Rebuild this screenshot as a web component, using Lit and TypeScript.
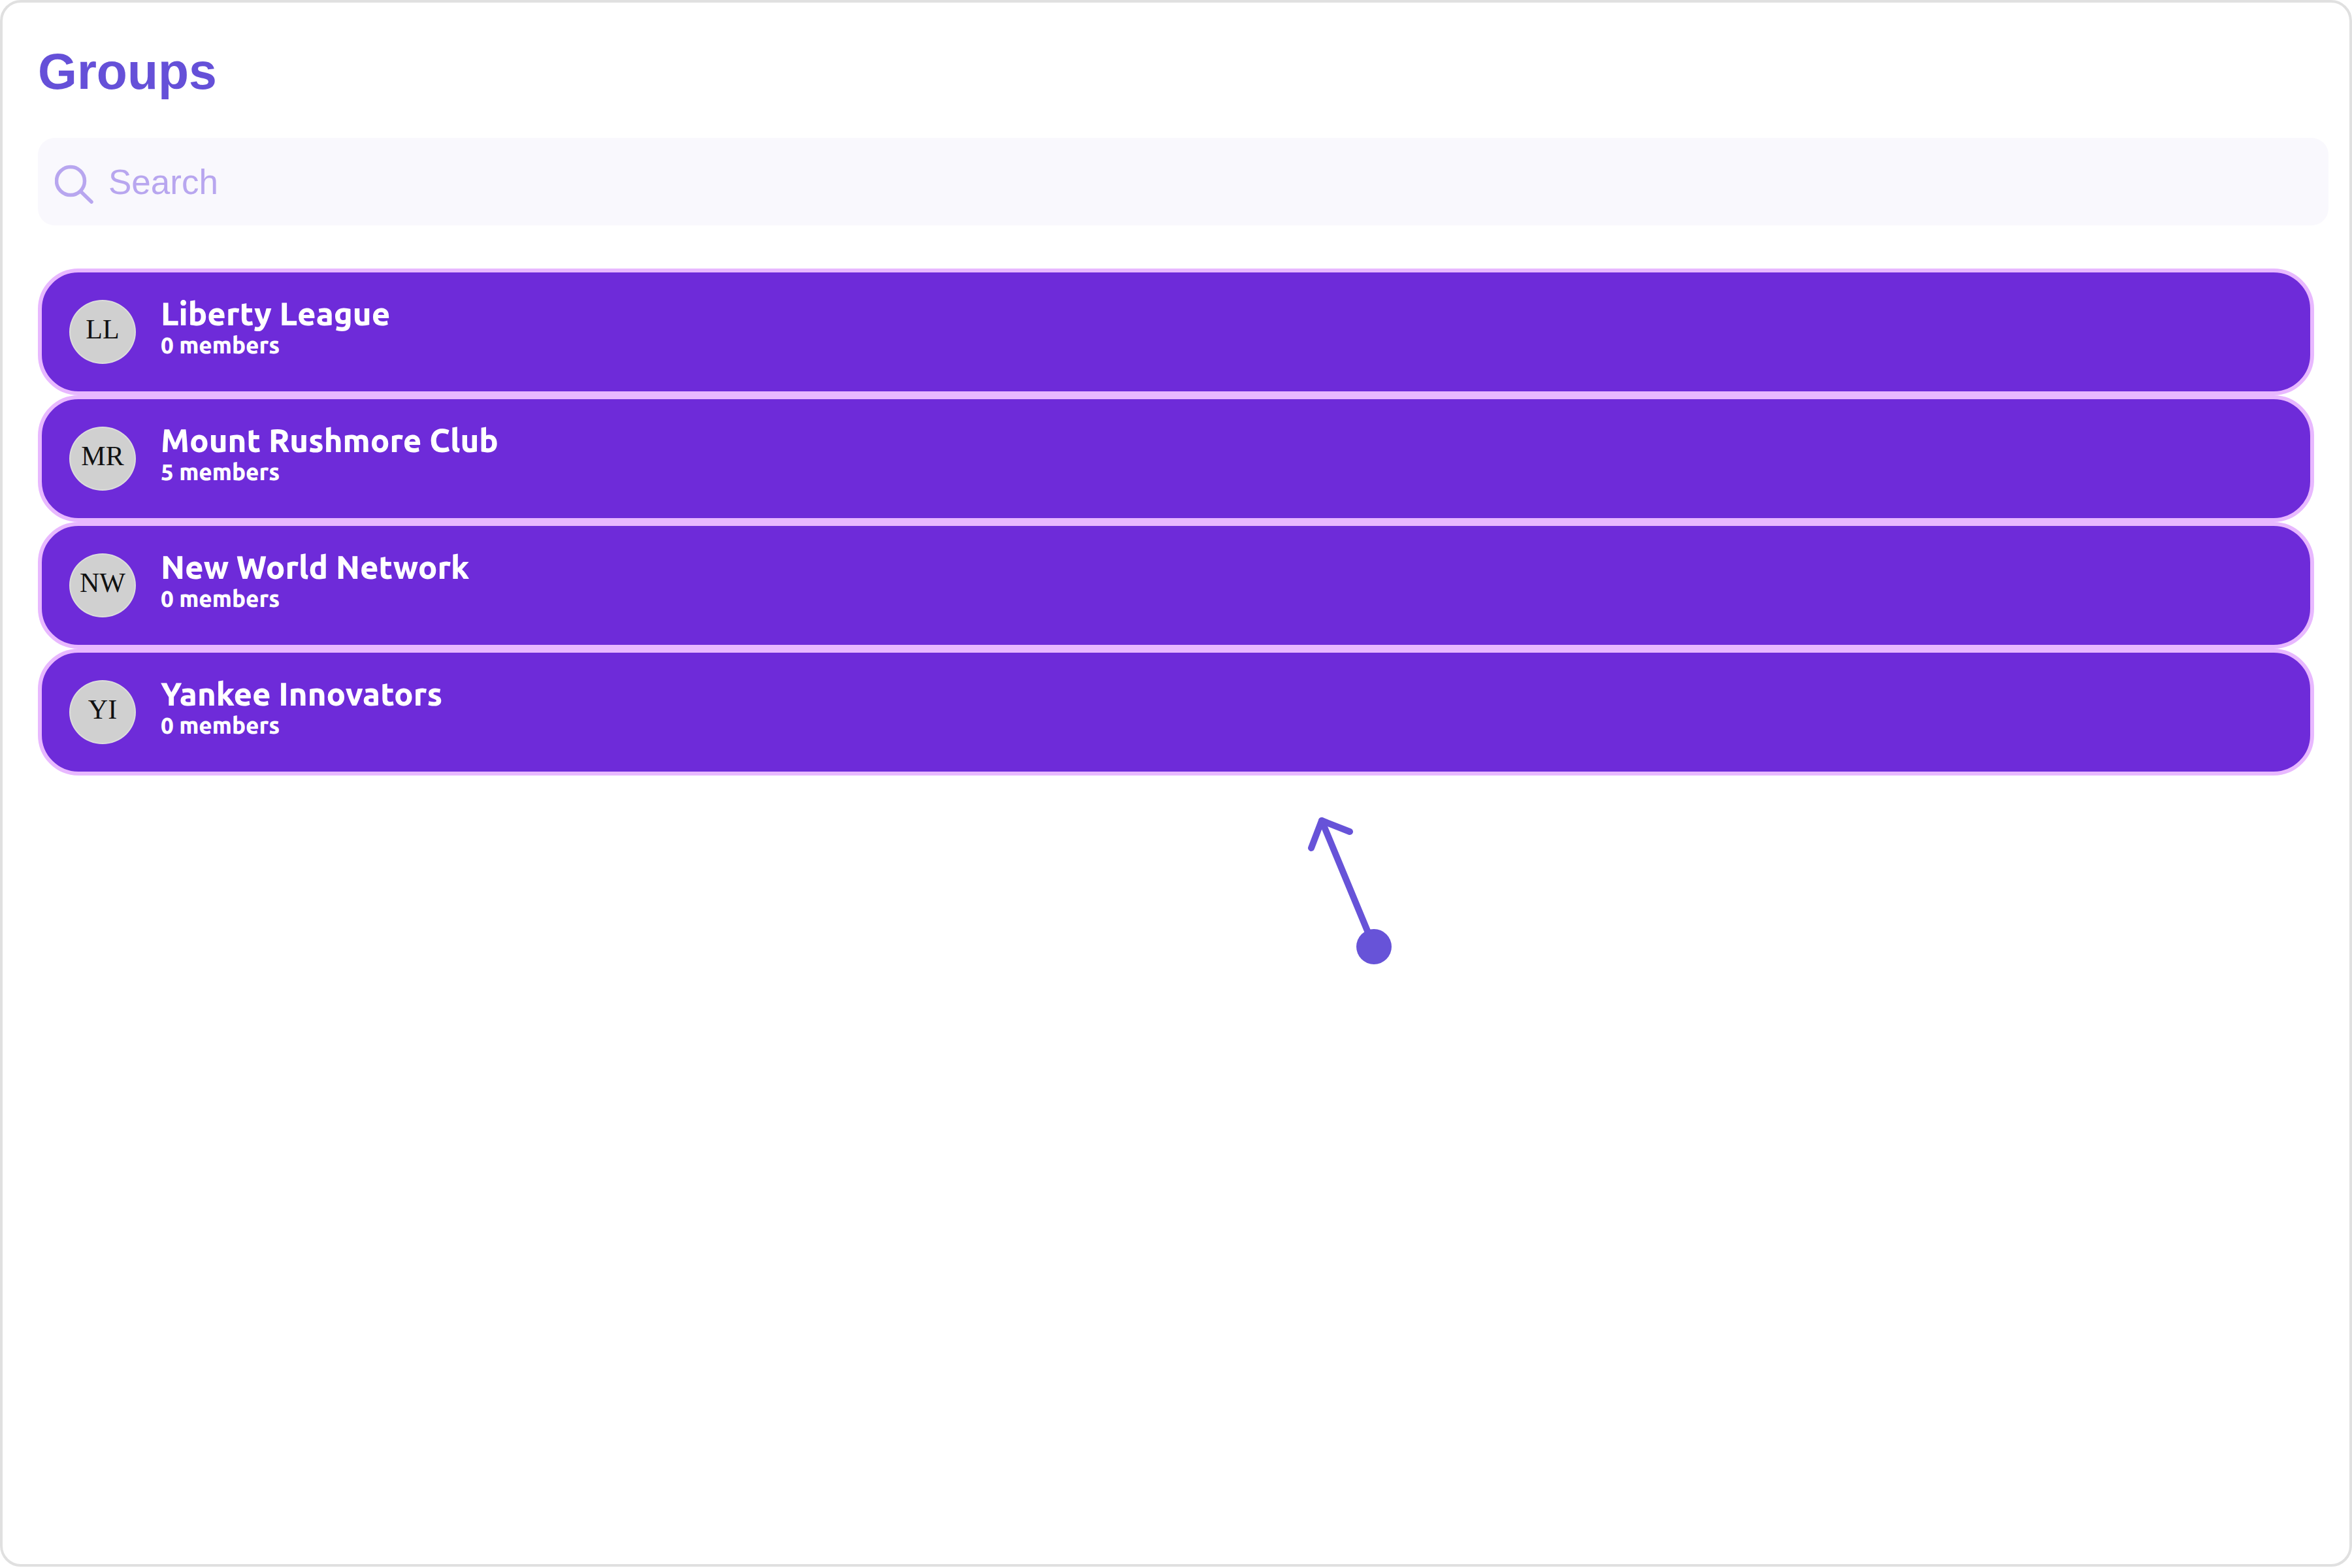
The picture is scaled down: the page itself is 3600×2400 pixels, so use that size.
import { LitElement, html, css } from 'lit';
import { customElement } from 'lit/decorators.js';

interface Group {
  initials: string;
  name: string;
  members: number;
}

const GROUPS: Group[] = [
  { initials: 'LL', name: 'Liberty League', members: 0 },
  { initials: 'MR', name: 'Mount Rushmore Club', members: 5 },
  { initials: 'NW', name: 'New World Network', members: 0 },
  { initials: 'YI', name: 'Yankee Innovators', members: 0 },
];

@customElement('app-root')
export class AppRoot extends LitElement {
  static styles = css`
    :host {
      display: block;
      width: 3600px;
      height: 2398px;
      font-family: 'Liberation Sans', Arial, sans-serif;
    }

    .panel {
      position: relative;
      box-sizing: border-box;
      width: 100%;
      height: 100%;
      padding: 60px 32px 0 54px;
      border: 4px solid #e0e0e0;
      border-radius: 32px;
      background: #fff;
    }

    h1 {
      margin: 0;
      font-size: 77px;
      line-height: 90px;
      font-weight: 700;
      color: #6550d8;
    }

    .search {
      display: flex;
      align-items: center;
      gap: 22px;
      height: 134px;
      margin-top: 57px;
      padding-left: 26px;
      border-radius: 26px;
      background: #f9f8fd;
      font-size: 53px;
      color: #b8a6ef;
    }

    .search svg {
      width: 60px;
      height: 60px;
      flex: none;
      margin-top: 8px;
    }

    .list {
      display: flex;
      flex-direction: column;
      margin: 66px 22px 0 0;
    }

    .row {
      box-sizing: border-box;
      display: flex;
      align-items: center;
      gap: 38px;
      height: 194px;
      padding-left: 42px;
      border: 6px solid #e8b8ff;
      border-radius: 62px;
      background: #6e2bd9;
      color: #fff;
    }

    .avatar {
      box-sizing: border-box;
      display: flex;
      align-items: center;
      justify-content: center;
      width: 102px;
      height: 98px;
      flex: none;
      padding-bottom: 8px;
      border: 2px solid #dcdcdc;
      border-radius: 50%;
      background: #d0d0d0;
      font-family: 'Liberation Serif', serif;
      font-size: 42px;
      color: #111;
    }

    .info {
      display: flex;
      flex-direction: column;
      margin-top: -14px;
      font-family: Ubuntu, 'Noto Sans', sans-serif;
      font-weight: 900;
    }

    .name {
      font-size: 49px;
      line-height: 54px;
    }

    .count {
      font-size: 35px;
      line-height: 42px;
    }

    .arrow {
      position: absolute;
      left: 1950px;
      top: 1230px;
      width: 200px;
      height: 270px;
    }
  `;

  render() {
    return html`
      <div class="panel">
        <h1>Groups</h1>
        <div class="search">
          <svg viewBox="0 0 60 60" fill="none" stroke="#b8a6ef" stroke-width="5.5" stroke-linecap="round">
            <circle cx="24" cy="25" r="21.5" />
            <path d="M39.5 41 L56 57" />
          </svg>
          <span>Search</span>
        </div>
        <div class="list">
          ${GROUPS.map(
            (g) => html`
              <div class="row">
                <div class="avatar">${g.initials}</div>
                <div class="info">
                  <span class="name">${g.name}</span>
                  <span class="count">${g.members} members</span>
                </div>
              </div>
            `
          )}
        </div>
        <svg class="arrow" viewBox="1954 1234 200 270" fill="none" stroke="#6753d8" stroke-width="10" stroke-linecap="round" stroke-linejoin="round">
          <path d="M2103 1449 L2023 1256" />
          <path d="M2007 1298 L2023 1256 L2066 1273" />
          <circle cx="2103" cy="1449" r="27" fill="#6753d8" stroke="none" />
        </svg>
      </div>
    `;
  }
}
